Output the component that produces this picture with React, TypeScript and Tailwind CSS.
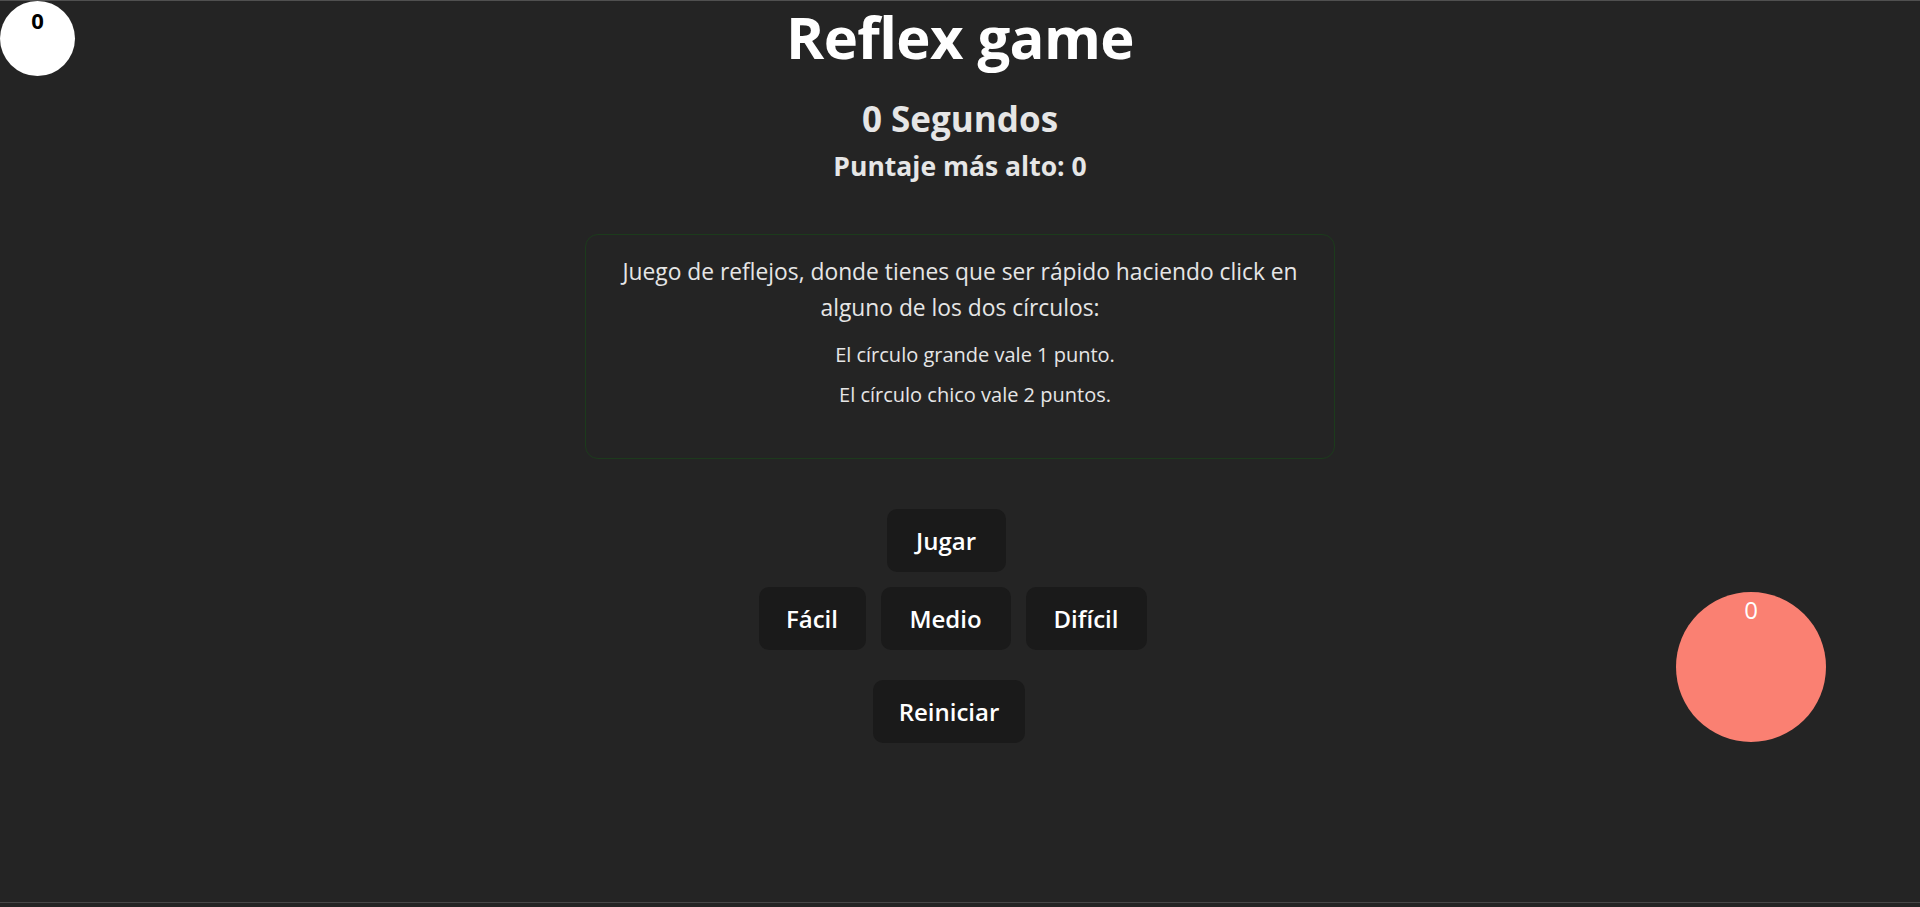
import { useState } from "react";

const font = { fontFamily: '"Open Sans", "Noto Sans", sans-serif' };

function GameButton({ label, width }: { label: string; width: string }) {
  return (
    <button
      className={`${width} h-[63px] rounded-[10px] bg-[#1a1a1a] border border-transparent text-[24px] font-semibold text-white flex items-center justify-center hover:border-[#646cff] transition-colors`}
    >
      {label}
    </button>
  );
}

export default function App() {
  const [score] = useState(0);
  const [seconds] = useState(0);
  const [best] = useState(0);

  return (
    <div style={font} className="relative h-[907px] overflow-hidden bg-[#242424] text-[#e6e6e6]">
      <div className="h-[902px] border-t border-[#505050] flex flex-col items-center">
        <h1 className="text-[58px] font-bold leading-[72px] tracking-[-0.6px] text-white">Reflex game</h1>
        <h2 className="mt-[25px] text-[35px] font-bold leading-[42px]">{seconds} Segundos</h2>
        <h3 className="mt-[9px] text-[26.5px] font-bold leading-[34px]">Puntaje más alto: {best}</h3>

        {/* Instrucciones */}
        <div className="mt-[51px] w-[750px] h-[225px] rounded-[13px] border border-[#1c3b1c] pt-[19px] px-[25px] text-center">
          <p className="text-[22.8px] leading-[36px]">
            Juego de reflejos, donde tienes que ser rápido haciendo click en alguno de los dos círculos:
          </p>
          <p className="mt-[15px] pl-[30px] text-[20px] leading-[28px]">El círculo grande vale 1 punto.</p>
          <p className="mt-[12px] pl-[30px] text-[20px] leading-[28px]">El círculo chico vale 2 puntos.</p>
        </div>

        <div className="mt-[50px] flex flex-col items-center">
          <div className="mr-[28px]">
            <GameButton label="Jugar" width="w-[119px]" />
          </div>
          <div className="mt-[15px] mr-[15px] flex gap-[15px]">
            <GameButton label="Fácil" width="w-[107px]" />
            <GameButton label="Medio" width="w-[130px]" />
            <GameButton label="Difícil" width="w-[121px]" />
          </div>
          <div className="mt-[30px] mr-[22px]">
            <GameButton label="Reiniciar" width="w-[152px]" />
          </div>
        </div>
      </div>
      <div className="h-[1px] bg-[#474747]" />

      {/* Círculos del juego */}
      <div className="absolute left-0 top-[1px] w-[75px] h-[75px] rounded-full bg-white flex justify-center pt-[3px]">
        <span className="text-[22px] font-bold leading-[33px] text-black">{score}</span>
      </div>
      <div className="absolute left-[1676px] top-[592px] w-[150px] h-[150px] rounded-full bg-[#fa8072] flex justify-center">
        <span className="text-[24px] leading-[36px] text-white">{score}</span>
      </div>
    </div>
  );
}
